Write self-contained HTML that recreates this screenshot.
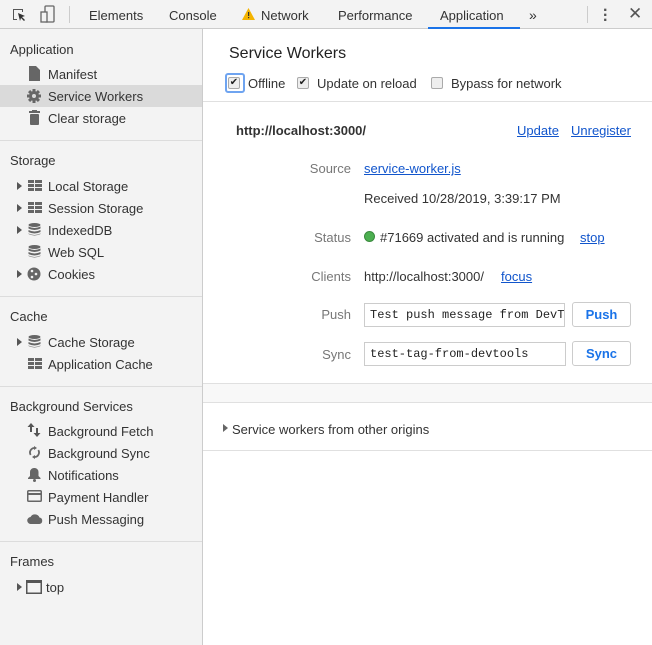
<!DOCTYPE html>
<html><head><meta charset="utf-8"><style>
*{margin:0;padding:0;box-sizing:border-box}
body{width:652px;height:645px;overflow:hidden;font-family:"Liberation Sans",Arial,sans-serif;font-size:13px;color:#333;background:#fff;position:relative}
.a{position:absolute;white-space:nowrap;line-height:16px;margin-top:1px}
.tb{position:absolute;left:0;top:0;width:652px;height:29px;background:#f3f3f3;border-bottom:1px solid #ccc}
.side{position:absolute;left:0;top:29px;width:203px;height:616px;background:#f3f3f3;border-right:1px solid #ccc}
.hr{position:absolute;height:1px;background:#dcdcdc}
.h{color:#333}
.lbl{color:#777;text-align:right;width:120px}
a,.lk{color:#1155cc;text-decoration:underline}
.tri{position:absolute;width:0;height:0;border-left:5px solid #555;border-top:4px solid transparent;border-bottom:4px solid transparent}
.ic{position:absolute}
.inp{position:absolute;border:1px solid #ccc;height:24px;font-family:"Liberation Mono",monospace;font-size:12px;line-height:22px;padding-left:5px;overflow:hidden;white-space:nowrap;color:#222}
.btn{position:absolute;border:1px solid #ccc;border-radius:3px;height:25px;color:#1a73e8;font-weight:bold;text-align:center;line-height:23px;background:#fff}
.cb{position:absolute;width:12px;height:12px;border:1px solid #aaa;border-radius:2px;background:#eee;font-size:10px;line-height:10px;text-align:center;color:#222}
</style></head><body>
<div class="tb"></div>
<svg class="ic" style="left:11px;top:7px" width="16" height="16" viewBox="0 0 16 16"><path d="M2 2h10v3h-1V3H3v9h3v1H2z" fill="#555"/><path d="M7 6l7 3-3 1 3 3-1 1-3-3-1 3z" fill="#333"/></svg>
<svg class="ic" style="left:40px;top:5px" width="16" height="18" viewBox="0 0 16 18"><rect x="5" y="1" width="9" height="16" rx="1" fill="none" stroke="#666" stroke-width="1.3"/><rect x="1" y="7" width="6" height="10" fill="#f3f3f3" stroke="#666" stroke-width="1.3"/></svg>
<div style="position:absolute;left:69px;top:6px;width:1px;height:17px;background:#ccc"></div>
<div class="a" style="left:89px;top:7px">Elements</div>
<div class="a" style="left:169px;top:7px">Console</div>
<svg class="ic" style="left:242px;top:8px" width="13" height="12" viewBox="0 0 13 12"><path d="M6.5 0L13 12H0z" fill="#f4b400"/><rect x="6" y="4" width="1.2" height="4" fill="#333"/><rect x="6" y="9" width="1.2" height="1.2" fill="#333"/></svg>
<div class="a" style="left:261px;top:7px">Network</div>
<div class="a" style="left:338px;top:7px">Performance</div>
<div class="a" style="left:440px;top:7px">Application</div>
<div style="position:absolute;left:428px;top:27px;width:92px;height:2px;background:#1a73e8"></div>
<div class="a" style="left:529px;top:6px;font-size:14px">»</div>
<div style="position:absolute;left:587px;top:6px;width:1px;height:17px;background:#ccc"></div>
<div class="a" style="left:603px;top:7px;font-weight:bold;line-height:5px;font-size:16px;color:#555">·<br>·<br>·</div>
<div class="a" style="left:628px;top:5px;font-size:17px;color:#555">✕</div>

<div class="side"></div>
<div class="a h" style="left:10px;top:41px">Application</div>
<svg class="ic" style="left:29px;top:66px" width="11" height="15" viewBox="0 0 11 15"><path d="M0 0h7l4 4v11H0z" fill="#666"/></svg>
<div class="a" style="left:48px;top:66px">Manifest</div>
<div style="position:absolute;left:0;top:85px;width:202px;height:22px;background:#dadada"></div>
<svg class="ic" style="left:27px;top:89px" width="14" height="14" viewBox="0 0 14 14"><g fill="#666"><rect x="5.5" y="0" width="3" height="14"/><rect x="0" y="5.5" width="14" height="3"/><rect x="5.5" y="0" width="3" height="14" transform="rotate(45 7 7)"/><rect x="5.5" y="0" width="3" height="14" transform="rotate(-45 7 7)"/><circle cx="7" cy="7" r="5"/></g><circle cx="7" cy="7" r="2" fill="#dadada"/></svg>
<div class="a" style="left:48px;top:88px">Service Workers</div>
<svg class="ic" style="left:29px;top:110px" width="11" height="15" viewBox="0 0 11 15"><rect x="0" y="1" width="11" height="2" fill="#666"/><rect x="3" y="0" width="5" height="2" fill="#666"/><rect x="1" y="4" width="9" height="11" rx="1" fill="#666"/></svg>
<div class="a" style="left:48px;top:110px">Clear storage</div>
<div class="hr" style="left:0;top:140px;width:202px"></div>

<div class="a h" style="left:10px;top:152px">Storage</div>
<div class="tri" style="left:17px;top:182px"></div>
<svg class="ic" style="left:28px;top:180px" width="14" height="11" viewBox="0 0 14 11"><path d="M0 0h6v3H0zM7 0h7v3H7zM0 4h6v3H0zM7 4h7v3H7zM0 8h6v3H0zM7 8h7v3H7z" fill="#666"/></svg>
<div class="a" style="left:48px;top:178px">Local Storage</div>
<div class="tri" style="left:17px;top:204px"></div>
<svg class="ic" style="left:28px;top:202px" width="14" height="11" viewBox="0 0 14 11"><path d="M0 0h6v3H0zM7 0h7v3H7zM0 4h6v3H0zM7 4h7v3H7zM0 8h6v3H0zM7 8h7v3H7z" fill="#666"/></svg>
<div class="a" style="left:48px;top:200px">Session Storage</div>
<div class="tri" style="left:17px;top:226px"></div>
<svg class="ic" style="left:28px;top:223px" width="13" height="13" viewBox="0 0 13 13"><ellipse cx="6.5" cy="2" rx="6" ry="2" fill="#666"/><path d="M0.5 3.5q6 3 12 0v2q-6 3-12 0zM0.5 7q6 3 12 0v2q-6 3-12 0zM0.5 10.5q6 3 12 0v.5q-6 3-12 0z" fill="#666"/></svg>
<div class="a" style="left:48px;top:222px">IndexedDB</div>
<svg class="ic" style="left:28px;top:245px" width="13" height="13" viewBox="0 0 13 13"><ellipse cx="6.5" cy="2" rx="6" ry="2" fill="#666"/><path d="M0.5 3.5q6 3 12 0v2q-6 3-12 0zM0.5 7q6 3 12 0v2q-6 3-12 0zM0.5 10.5q6 3 12 0v.5q-6 3-12 0z" fill="#666"/></svg>
<div class="a" style="left:48px;top:244px">Web SQL</div>
<div class="tri" style="left:17px;top:270px"></div>
<svg class="ic" style="left:27px;top:267px" width="14" height="14" viewBox="0 0 14 14"><circle cx="7" cy="7" r="6.5" fill="#666"/><circle cx="5" cy="4" r="1.3" fill="#f3f3f3"/><circle cx="9" cy="7" r="1.3" fill="#f3f3f3"/><circle cx="5" cy="10" r="1.3" fill="#f3f3f3"/></svg>
<div class="a" style="left:48px;top:266px">Cookies</div>
<div class="hr" style="left:0;top:296px;width:202px"></div>

<div class="a h" style="left:10px;top:308px">Cache</div>
<div class="tri" style="left:17px;top:338px"></div>
<svg class="ic" style="left:28px;top:335px" width="13" height="13" viewBox="0 0 13 13"><ellipse cx="6.5" cy="2" rx="6" ry="2" fill="#666"/><path d="M0.5 3.5q6 3 12 0v2q-6 3-12 0zM0.5 7q6 3 12 0v2q-6 3-12 0zM0.5 10.5q6 3 12 0v.5q-6 3-12 0z" fill="#666"/></svg>
<div class="a" style="left:48px;top:334px">Cache Storage</div>
<svg class="ic" style="left:28px;top:358px" width="14" height="11" viewBox="0 0 14 11"><path d="M0 0h6v3H0zM7 0h7v3H7zM0 4h6v3H0zM7 4h7v3H7zM0 8h6v3H0zM7 8h7v3H7z" fill="#666"/></svg>
<div class="a" style="left:48px;top:356px">Application Cache</div>
<div class="hr" style="left:0;top:386px;width:202px"></div>

<div class="a h" style="left:10px;top:398px">Background Services</div>
<svg class="ic" style="left:27px;top:423px" width="14" height="14" viewBox="0 0 14 14"><path d="M4 0L0.5 4h2.5v5h2V4h2.5zM10 14l3.5-4H11V5H9v5H6.5z" fill="#555"/></svg>
<div class="a" style="left:48px;top:423px">Background Fetch</div>
<svg class="ic" style="left:28px;top:446px" width="13" height="13" viewBox="0 0 13 13"><path d="M6.5 2a4.5 4.5 0 0 0-3.8 6.9" fill="none" stroke="#666" stroke-width="1.8"/><path d="M6.5 11a4.5 4.5 0 0 0 3.8-6.9" fill="none" stroke="#666" stroke-width="1.8"/><path d="M6 0v4l3-2zM7 13V9l-3 2z" fill="#666"/></svg>
<div class="a" style="left:48px;top:445px">Background Sync</div>
<svg class="ic" style="left:28px;top:467px" width="13" height="15" viewBox="0 0 13 15"><path d="M6.5 1a4 4 0 0 1 4 4v4l2 2v1H0v-1l2-2V5a4 4 0 0 1 4.5-4z" fill="#666"/><circle cx="6.5" cy="13.5" r="1.5" fill="#666"/></svg>
<div class="a" style="left:48px;top:467px">Notifications</div>
<svg class="ic" style="left:27px;top:490px" width="15" height="12" viewBox="0 0 15 12"><rect x="0.75" y="0.75" width="13.5" height="10.5" rx="1" fill="none" stroke="#666" stroke-width="1.5"/><rect x="1" y="3" width="13" height="2" fill="#666"/></svg>
<div class="a" style="left:48px;top:489px">Payment Handler</div>
<svg class="ic" style="left:27px;top:514px" width="16" height="10" viewBox="0 0 16 10"><path d="M4 10a3.5 3.5 0 0 1-.5-7A5 5 0 0 1 12.5 3.5 3.3 3.3 0 0 1 12.5 10z" fill="#666"/></svg>
<div class="a" style="left:48px;top:511px">Push Messaging</div>
<div class="hr" style="left:0;top:541px;width:202px"></div>

<div class="a h" style="left:10px;top:553px">Frames</div>
<div class="tri" style="left:17px;top:583px"></div>
<svg class="ic" style="left:26px;top:580px" width="16" height="14" viewBox="0 0 16 14"><rect x="0.75" y="0.75" width="14.5" height="12.5" fill="none" stroke="#555" stroke-width="1.5"/><rect x="1" y="1" width="14" height="2" fill="#555"/></svg>
<div class="a" style="left:46px;top:579px">top</div>

<div class="a" style="left:229px;top:44px;font-size:16px;line-height:18px;color:#222">Service Workers</div>
<div style="position:absolute;left:225px;top:73px;width:20px;height:20px;border:2px solid #6fa4f0;border-radius:3px"></div>
<div class="cb" style="left:228px;top:77px">✔</div>
<div class="a" style="left:248px;top:75px">Offline</div>
<div class="cb" style="left:297px;top:77px">✔</div>
<div class="a" style="left:317px;top:75px">Update on reload</div>
<div class="cb" style="left:431px;top:77px"></div>
<div class="a" style="left:451px;top:75px">Bypass for network</div>
<div class="hr" style="left:203px;top:101px;width:449px;background:#e0e0e0"></div>

<div class="a" style="left:236px;top:122px;font-weight:bold">http://localhost:3000/</div>
<div class="a lk" style="left:517px;top:122px">Update</div>
<div class="a lk" style="left:571px;top:122px">Unregister</div>
<div class="a lbl" style="left:231px;top:160px">Source</div>
<div class="a lk" style="left:364px;top:160px">service-worker.js</div>
<div class="a" style="left:364px;top:190px">Received 10/28/2019, 3:39:17 PM</div>
<div class="a lbl" style="left:231px;top:229px">Status</div>
<div style="position:absolute;left:364px;top:231px;width:11px;height:11px;border-radius:50%;background:#4caf50;border:1px solid #3a8a3e"></div>
<div class="a" style="left:380px;top:229px">#71669 activated and is running</div>
<div class="a lk" style="left:580px;top:229px">stop</div>
<div class="a lbl" style="left:231px;top:268px">Clients</div>
<div class="a" style="left:364px;top:268px">http://localhost:3000/</div>
<div class="a lk" style="left:501px;top:268px">focus</div>
<div class="a lbl" style="left:231px;top:306px">Push</div>
<div class="inp" style="left:364px;top:303px;width:201px">Test push message from DevTools</div>
<div class="btn" style="left:572px;top:302px;width:59px">Push</div>
<div class="a lbl" style="left:231px;top:346px">Sync</div>
<div class="inp" style="left:364px;top:342px;width:202px">test-tag-from-devtools</div>
<div class="btn" style="left:572px;top:341px;width:59px">Sync</div>

<div style="position:absolute;left:203px;top:383px;width:449px;height:20px;background:#f8f8f8;border-top:1px solid #e0e0e0;border-bottom:1px solid #e0e0e0"></div>
<div class="tri" style="left:223px;top:424px;border-left-color:#666"></div>
<div class="a" style="left:232px;top:421px">Service workers from other origins</div>
<div class="hr" style="left:203px;top:450px;width:449px;background:#e0e0e0"></div>
</body></html>
